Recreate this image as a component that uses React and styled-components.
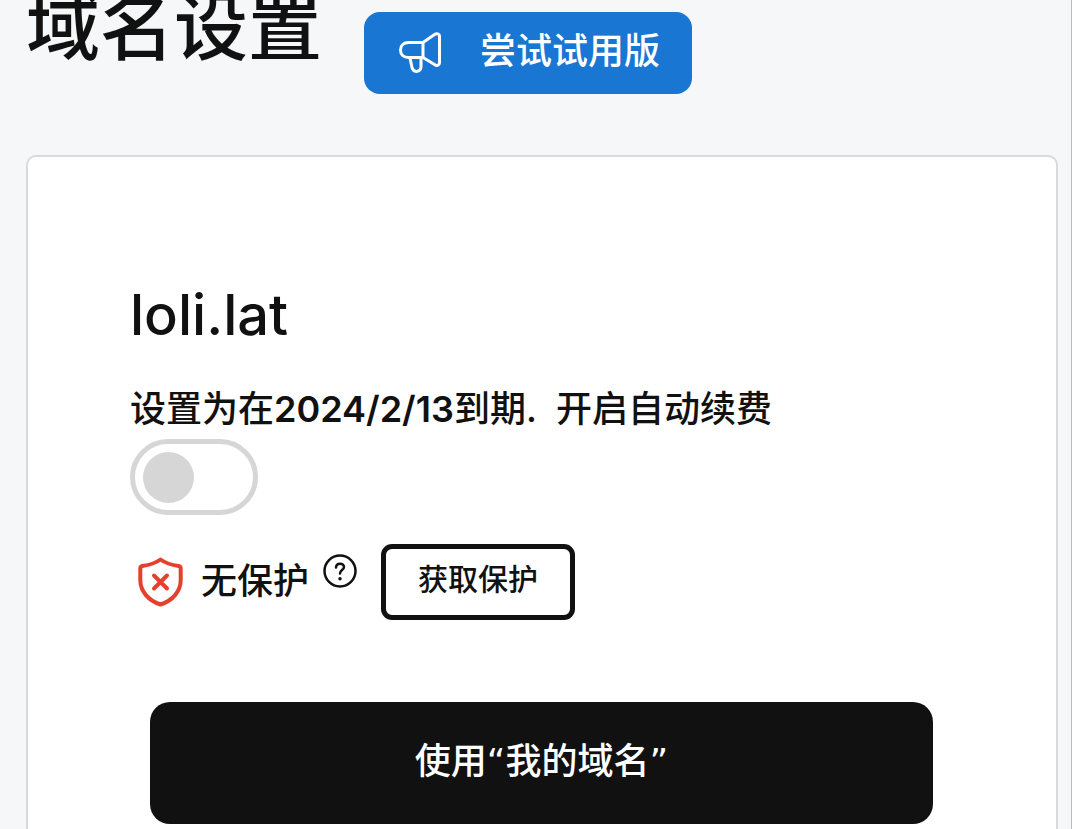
import { useState } from "react";
import styled, { createGlobalStyle } from "styled-components";

function MegaphoneIcon() {
  return (
    <svg width="44" height="44" viewBox="0 0 44 44" fill="none" stroke="currentColor" strokeWidth="3" strokeLinejoin="round" strokeLinecap="round" aria-hidden="true">
      <path d="M25 12.5H10.5C5.5 12.5 2.5 15.5 2.5 20S5.5 27.5 10.5 27.5H25" />
      <path d="M25 12.5 36.5 4.5C38.8 2.9 41.5 3.8 41.5 6V33C41.5 35.3 38.8 36.2 36.5 34.5L25 27.5Z" />
      <path d="M12 28 14 37.5C15.3 43.3 23.3 42.3 23 36.5V28" />
    </svg>
  );
}

function ShieldIcon() {
  return (
    <svg width="46" height="50" viewBox="0 0 46 50" fill="none" stroke="currentColor" strokeWidth="4" strokeLinejoin="round" strokeLinecap="round" aria-hidden="true">
      <path d="M22.5 2.5C17 6.5 10.5 8.2 4.5 9C3 9.3 2.3 10.2 2.3 11.6V23C2.3 34 10 43.5 22.5 47.5C35 43.5 42.7 34 42.7 23V11.6C42.7 10.2 42 9.3 40.5 9C34.5 8.2 28 6.5 22.5 2.5Z" />
      <path d="M16 18.5 29 31.5M29 18.5 16 31.5" />
    </svg>
  );
}

function HelpIcon() {
  return (
    <svg width="34" height="34" viewBox="0 0 34 34" fill="none" stroke="currentColor" strokeWidth="2.5" strokeLinecap="round" strokeLinejoin="round" aria-hidden="true">
      <circle cx="17" cy="17" r="15.5" />
      <path d="M13 13.5C13.2 8.5 21 8.5 21 13C21 16 17 16.2 17 19.5" />
      <circle cx="17" cy="24.8" r="1" fill="currentColor" strokeWidth="1.5" />
    </svg>
  );
}

function App() {
  const [autoRenew, setAutoRenew] = useState(false);

  return (
    <>
      <GlobalStyle />
      <Page>
        <Header>
          <Title>域名设置</Title>
          <TrialButton type="button">
            <MegaphoneIcon />
            <IconText>尝试试用版</IconText>
          </TrialButton>
        </Header>
        <Card>
          <DomainName>loli.lat</DomainName>
          <RenewLabel htmlFor="autoRenew">
            设置为在<b>2024/2/13</b>到期.{"\u00a0\u00a0"}开启自动续费
          </RenewLabel>
          <Switch
            id="autoRenew"
            type="checkbox"
            checked={autoRenew}
            onChange={(e) => {
              setAutoRenew(e.target.checked);
            }}
          />
          <Protection>
            <Status>
              <ShieldIcon />
              <IconText>无保护</IconText>
            </Status>
            <HelpButton type="button" aria-label="帮助">
              <HelpIcon />
            </HelpButton>
            <OutlineButton type="button">获取保护</OutlineButton>
          </Protection>
          <PrimaryButton type="button">使用“我的域名”</PrimaryButton>
        </Card>
      </Page>
    </>
  );
}

export default App;

const GlobalStyle = createGlobalStyle`
  * {
    box-sizing: border-box;
  }

  body {
    margin: 0;
    background: #f5f7f9;
    color: #111;
    font-family: Inter, "Noto Sans CJK SC", sans-serif;
    font-size: 36px;
    font-weight: 500;
  }

  button {
    margin: 0;
    font: inherit;
    cursor: pointer;
  }
`;

const Page = styled.div`
  display: flex;
  flex-direction: column;
  min-height: 100vh;
  padding: 0 13px 0 26px;
  border-right: 1px solid #bbb;
`;

const Header = styled.header`
  display: flex;
  align-items: flex-start;
  gap: 42px;
  margin-bottom: 61px;
`;

const Title = styled.h1`
  margin: 0;
  font-size: 74px;
  font-weight: 500;
  line-height: 54px;
`;

const IconText = styled.span`
  padding-bottom: 8px;
`;

const TrialButton = styled.button`
  display: flex;
  align-items: center;
  gap: 38px;
  height: 82px;
  margin-top: 12px;
  padding: 0 32px 2px 34px;
  border: 0;
  border-radius: 16px;
  background: #1976d2;
  color: #fff;
`;

const Card = styled.main`
  flex: 1;
  display: flex;
  flex-direction: column;
  align-items: flex-start;
  padding: 126px 103px 5px 102px;
  border: 2px solid #d6dbdf;
  border-bottom: 0;
  border-radius: 10px 10px 0 0;
  background: #fff;
`;

const DomainName = styled.h2`
  margin: 0;
  font-size: 56px;
  font-weight: 500;
  line-height: 64px;
`;

const RenewLabel = styled.label`
  margin-top: 35px;
  line-height: 54px;

  b {
    font-weight: 600;
  }
`;

const Switch = styled.input`
  appearance: none;
  display: flex;
  align-items: center;
  justify-content: ${(props) => (props.checked ? "flex-end" : "flex-start")};
  width: 128px;
  height: 76px;
  margin: 3px 0 0;
  padding: 0 8px;
  border: 5px solid #d6d6d6;
  border-radius: 38px;
  cursor: pointer;

  &::before {
    content: "";
    width: 51px;
    height: 51px;
    border-radius: 50%;
    background: #d6d6d6;
  }
`;

const Protection = styled.div`
  display: flex;
  align-items: center;
  margin-top: 29px;
`;

const Status = styled.div`
  display: flex;
  align-items: center;
  gap: 17px;
  padding-left: 8px;

  svg {
    color: #e5402e;
  }
`;

const HelpButton = styled.button`
  display: flex;
  align-self: flex-start;
  margin: 10px 24px 0 14px;
  padding: 0;
  border: 0;
  background: none;
  color: inherit;
`;

const OutlineButton = styled.button`
  height: 76px;
  padding: 0 32px 10px;
  border: 5px solid #111;
  border-radius: 11px;
  background: #fff;
  color: #111;
  font-size: 30px;
`;

const PrimaryButton = styled.button`
  align-self: stretch;
  height: 122px;
  margin: 82px 20px 0;
  padding: 0 0 10px;
  border: 0;
  border-radius: 20px;
  background: #111;
  color: #fff;
  font-family: "DejaVu Sans", "Noto Sans CJK SC", sans-serif;
`;
